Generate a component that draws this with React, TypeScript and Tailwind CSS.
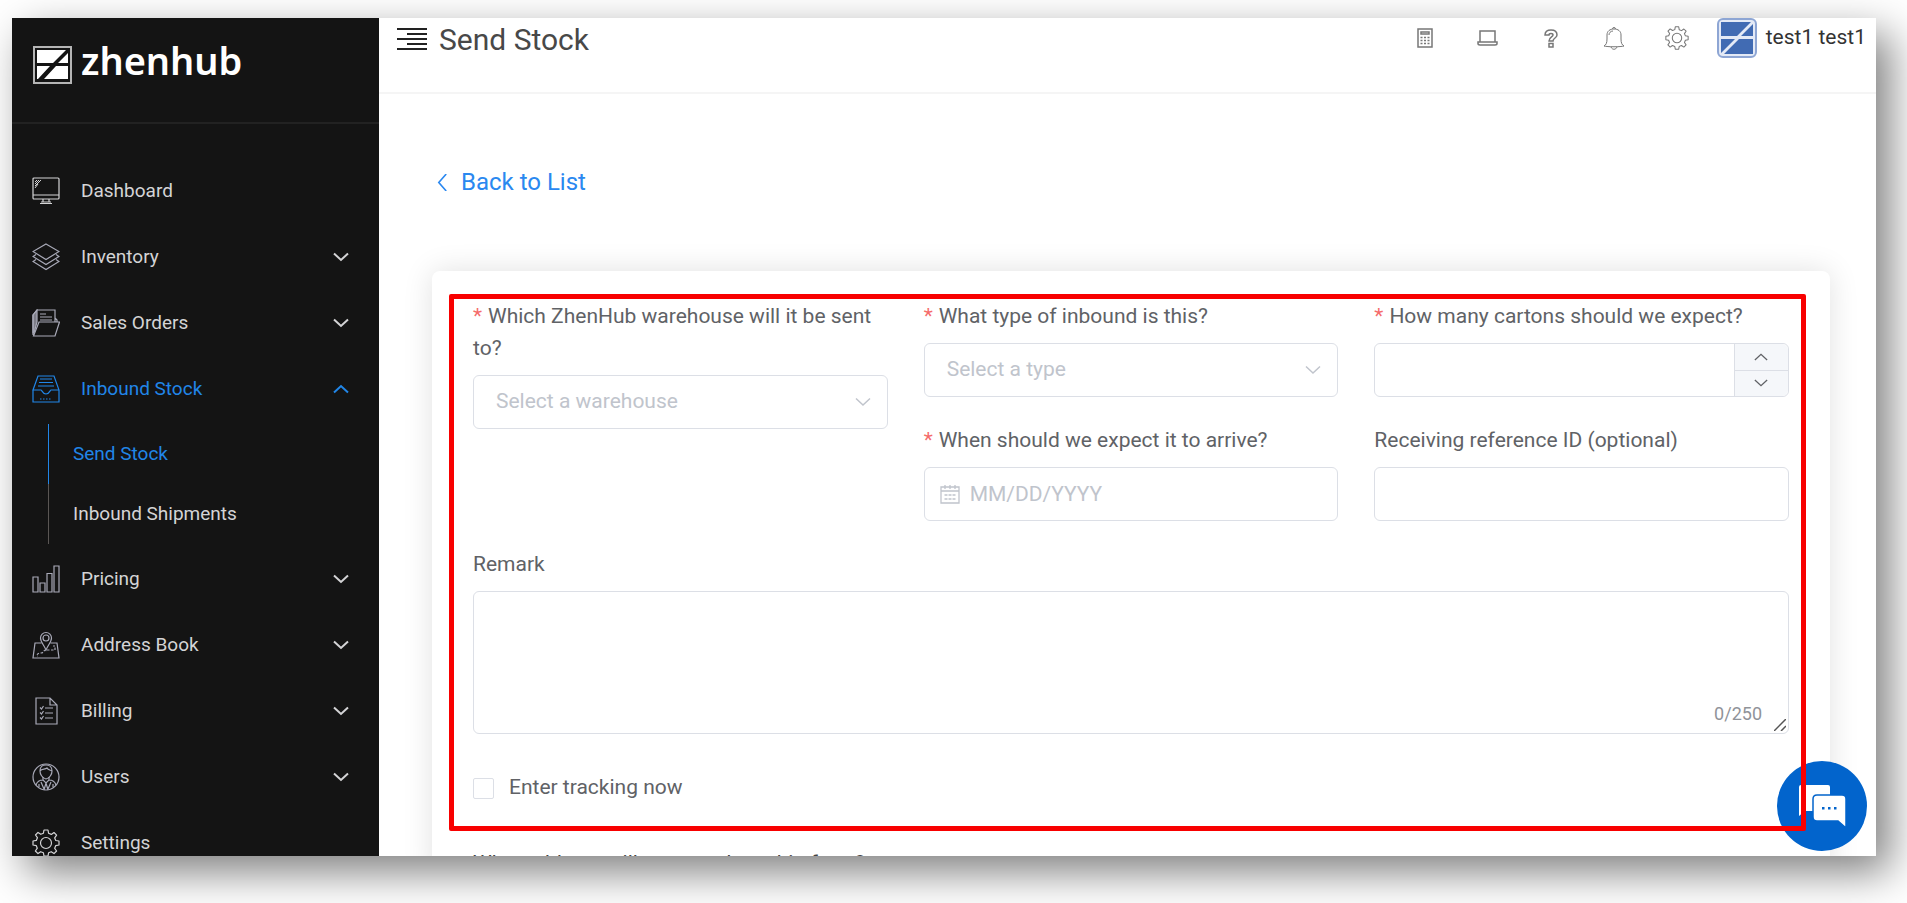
import React, { useState } from 'react';

const iconBase = {
  width: 28,
  height: 28,
  viewBox: '0 0 28 28',
  fill: 'none',
  stroke: 'currentColor',
  strokeWidth: 1.2,
  'aria-hidden': true,
} as const;

const gearPath =
  'M12 1h4l.6 3.3 2.7 1.1L22 3.500l2.600 2.600-1.900 2.800 1.100 2.600L27 12v4l-3.200.6-1.100 2.700 1.900 2.700-2.600 2.600-2.800-1.900-2.600 1.100L16 27h-4l-.6-3.200-2.700-1.100L6 24.600 3.400 22l1.900-2.800-1.100-2.600L1 16v-4l3.300-.6 1.100-2.700L3.500 6 6 3.400l2.800 1.900 2.600-1.100z';

const DashboardIcon = () => (
  <svg {...iconBase}>
    <rect x="1" y="1" width="26" height="21" rx="1" />
    <path d="M1 18h26M11 22v3M17 22v3M8 26.500h12M9 25h10" />
    <path d="M3 9l6-6M3 7l4-4M3 5l2-2M3 11l3-4" strokeWidth="1" />
  </svg>
);

const InventoryIcon = () => (
  <svg {...iconBase} className="text-[#a9aab8]">
    <path d="M14 1l13 7.500-13 8-13-8z" />
    <path d="M4 11.500l-3 2 13 8 13-8-3-2" />
    <path d="M4 16.500l-3 2 13 8 13-8-3-2" />
  </svg>
);

const OrdersIcon = () => (
  <svg {...iconBase} className="text-[#a9aab8]">
    <path d="M1.500 27L7 13h20.500L23 27zM1 26V6l4-5h18v12M23 9l2 2v2" />
    <path d="M1 6l4-5v12L2 24H1z" fill="currentColor" fillOpacity="0.7" />
    <path d="M8 5h6M8 8h12M8 11h12" />
  </svg>
);

const InboundIcon = () => (
  <svg {...iconBase}>
    <path d="M1 15v12h26V15L22 1H6L1 15h8c1 0 1.500 4 5 4s4-4 5-4h8" />
    <path d="M8 4h12M7 7.500h14M6 11h16" />
    <path d="M8 24h12" strokeDasharray="1.500 1.500" />
  </svg>
);

const PricingIcon = () => (
  <svg {...iconBase} className="text-[#a9aab8]">
    <path d="M1 12h5v15H1zM8 18h5v9H8zM15 8.500h5V27h-5zM22 1h5v26h-5z" />
  </svg>
);

const AddressIcon = () => (
  <svg {...iconBase} className="text-[#a9aab8]">
    <path d="M9.500 12H3L1 27h26l-2-15h-6.500" />
    <path d="M14 19c-2-5-5.500-8-5.500-12a5.500 5.500 0 0 1 11 0c0 4-3.500 7-5.500 12z" />
    <circle cx="14" cy="7" r="3" />
    <path d="M14 19c-3 0-2 3-5 3-4 0-5 3-3 3M15 19h8v-4h-2" strokeDasharray="2.500 1.500" />
  </svg>
);

const BillingIcon = () => (
  <svg {...iconBase} className="text-[#a9aab8]">
    <path d="M4 1h14l7 7v19H4zM18 1v7h7" />
    <path d="M8 10.500l1.500 1.500 2-3M13 11h8M8 15.500l1.500 1.500 2-3M13 16h8M8 20.500l1.500 1.500 2-3M13 21h8" />
  </svg>
);

const UsersIcon = () => (
  <svg {...iconBase} className="text-[#a9aab8]">
    <circle cx="14" cy="14" r="13" />
    <path d="M8 8c0-5 3-6 6-6s6 1 6 6c0 3-2 7-6 8-4-1-6-5-6-8zM8 8c2-3 5-1 7-3 1 2 3 2 5 3" />
    <path d="M11 14v3l3 3 3-3v-3M11 17c-4 0-6 2-7 5M17 17c4 0 6 2 7 5M14 20l-2 7M14 20l2 7M9 19l3 7M19 19l-3 7M7 21v3M21 21v3" />
  </svg>
);

const GearIcon = ({ size = 28 }: { size?: number }) => (
  <svg {...iconBase} width={size} height={size}>
    <path d={gearPath} strokeLinejoin="round" />
    <circle cx="14" cy="14" r="5.500" />
  </svg>
);

const Chevron = ({ direction, size = 16, width = 2 }: { direction: 'up' | 'down' | 'left'; size?: number; width?: number }) => {
  const paths = { up: 'M1 11.500L8 5l7 6.500', down: 'M1 4.500L8 11l7-6.500', left: 'M11.500 0L4.500 8l7 8' };
  return (
    <svg width={size} height={size} viewBox="0 0 16 16" fill="none" stroke="currentColor" strokeWidth={width} aria-hidden>
      <path d={paths[direction]} />
    </svg>
  );
};

type NavItem = {
  label: string;
  icon: React.FC;
  expandable?: boolean;
  children?: string[];
};

const navItems: NavItem[] = [
  { label: 'Dashboard', icon: DashboardIcon },
  { label: 'Inventory', icon: InventoryIcon, expandable: true },
  { label: 'Sales Orders', icon: OrdersIcon, expandable: true },
  { label: 'Inbound Stock', icon: InboundIcon, expandable: true, children: ['Send Stock', 'Inbound Shipments'] },
  { label: 'Pricing', icon: PricingIcon, expandable: true },
  { label: 'Address Book', icon: AddressIcon, expandable: true },
  { label: 'Billing', icon: BillingIcon, expandable: true },
  { label: 'Users', icon: UsersIcon, expandable: true },
  { label: 'Settings', icon: GearIcon },
];

const Sidebar: React.FC = () => (
  <aside className="w-[367px] shrink-0 bg-[#141414] text-[#d4d4d6]">
    {/* Logo */}
    <a href="#home" className="flex h-[106px] items-start gap-2 border-b-2 border-[#222] px-5 pt-5 text-white">
      <svg width="41" height="49" viewBox="0 0 41 49" aria-hidden>
        <rect x="2" y="9" width="37" height="36" fill="#141414" stroke="#b5b5b5" strokeWidth="2" />
        <path d="M5 12h29L21 25H5zM5 28h13L6 41H5zM36 15v10H26zM24 28h12v13H12z" fill="#fff" />
      </svg>
      <span className="font-['Noto_Sans'] text-[38px] leading-[44px] font-semibold">zhenhub</span>
    </a>

    {/* Navigation */}
    <nav className="pt-[34px]">
      {navItems.map(({ label, icon: Icon, expandable, children }) => (
        <div key={label} className={children ? 'text-[#2186e8]' : ''}>
          <a href="#nav" className="flex h-[66px] items-center pr-[30px] pl-5">
            <Icon />
            <span className="ml-[21px] flex-1 text-[19px]">{label}</span>
            {expandable && <Chevron direction={children ? 'up' : 'down'} />}
          </a>
          {children && (
            <ul className="my-[2px] ml-9">
              {children.map((child, index) => (
                <li key={child} className={index === 0 ? 'border-l border-[#2186e8]' : 'border-l border-[#5a5654] text-[#d4d4d6]'}>
                  <a href="#nav" className="flex h-[60px] items-center pl-6 text-[19px]">
                    {child}
                  </a>
                </li>
              ))}
            </ul>
          )}
        </div>
      ))}
    </nav>
  </aside>
);

const Header: React.FC = () => (
  <header className="flex h-[76px] items-start justify-between border-b-2 border-[#f5f5f5] pr-[10px] pl-[18px]">
    <div className="flex h-[42px] items-center gap-3">
      <button type="button" aria-label="Toggle menu" className="text-[#222]">
        <svg width="30" height="22" viewBox="0 0 30 22" stroke="currentColor" strokeWidth="2" aria-hidden>
          <path d="M0 1h30M10 6h20M0 11h30M10 16h20M0 21h30" />
        </svg>
      </button>
      <h1 className="text-[30px] text-[#484848]">Send Stock</h1>
    </div>

    <div className="flex h-10 items-center text-[#777]">
      <div className="mr-7 flex items-center gap-[39px]">
        <button type="button" aria-label="Calculator" className="flex w-6 justify-center">
          <svg width="16" height="20" viewBox="0 0 16 20" fill="none" stroke="currentColor" strokeWidth="1.500" aria-hidden>
            <path d="M1 1h14v18H1zM4 4h8v2H4z" />
            <path d="M3.500 9.500h2M7 9.500h2M10.500 9.500h2M3.500 12.500h2M7 12.500h2M10.500 12.500h2M3.500 15.500h2M7 15.500h2M10.500 15.500h2" />
          </svg>
        </button>
        <button type="button" aria-label="Desktop" className="flex w-6 justify-center">
          <svg width="21" height="16" viewBox="0 0 21 16" fill="none" stroke="currentColor" strokeWidth="1.500" aria-hidden>
            <path d="M3 12V1h15v11M1 12h19v1.500q0 1.500-2 1.500H3q-2 0-2-1.500z" />
          </svg>
        </button>
        <button type="button" aria-label="Help" className="flex w-6 justify-center">
          <svg width="14" height="19" viewBox="0 0 14 19" fill="none" stroke="currentColor" strokeWidth="1.500" aria-hidden>
            <path d="M1 6c0-3 2-5 6-5s6 2 6 5c0 3-4 3-4 6H5c0-4 4-4 4-6 0-2-4-2-4 0zM5 14.500h4V18H5z" />
          </svg>
        </button>
        <button type="button" aria-label="Notifications" className="flex w-6 justify-center">
          <svg width="22" height="24" viewBox="0 0 22 24" fill="none" stroke="currentColor" strokeWidth="1" aria-hidden>
            <path d="M1 20c2-1 3-3 3-7V9c0-4 3-6 7-6s7 2 7 6v4c0 4 1 6 3 7-3 1-17 1-20 0zM9.500 3a1.500 1.500 0 0 1 3 0M8 21c1 3 5 3 6 0M6 9c0-2 1.500-4 4-4" />
          </svg>
        </button>
        <button type="button" aria-label="Settings" className="flex w-6 justify-center">
          <GearIcon size={24} />
        </button>
      </div>
      <button type="button" className="flex items-center gap-[9px] text-[21px] text-[#333]">
        <svg width="40" height="40" viewBox="0 0 40 40" aria-hidden>
          <rect x="1" y="1" width="38" height="38" rx="5" fill="#e4eaf6" stroke="#8ea6d4" strokeWidth="2" />
          <path d="M4 4h30L20 18H4zM4 21h14L4 35zM36 6v12H24zM22 21h14v15H7z" fill="#416bb3" />
        </svg>
        test1 test1
      </button>
    </div>
  </header>
);

const controlClass =
  'h-[54px] w-full rounded-md border border-[#dcdfe6] bg-white text-[21px] text-[#606266] outline-none placeholder:text-[#c0c4cc] placeholder:opacity-100';

type FieldProps = {
  id: string;
  label: string;
  required?: boolean;
  children: React.ReactNode;
};

const Field: React.FC<FieldProps> = ({ id, label, required, children }) => (
  <div className="flex flex-col gap-[11px]">
    <label htmlFor={id} className="leading-8">
      {required && <span className="mr-[6px] text-[#f56c6c]">*</span>}
      {label}
    </label>
    <div className="relative flex">{children}</div>
  </div>
);

const SelectBox: React.FC<{ id: string; placeholder: string }> = ({ id, placeholder }) => (
  <>
    <select id={id} defaultValue="" className={`${controlClass} appearance-none pl-[22px] !text-[#c0c4cc]`}>
      <option value="">{placeholder}</option>
    </select>
    <span className="pointer-events-none absolute inset-y-0 right-[17px] flex items-center text-[#c0c4cc]">
      <Chevron direction="down" width={1.5} />
    </span>
  </>
);

const StockForm: React.FC = () => {
  const [cartons, setCartons] = useState('');
  const [remark, setRemark] = useState('');

  return (
    <form className="relative mx-auto rounded-lg bg-white px-[41px] pt-[29px] text-[21px] text-[#606266] shadow-[0_0_30px_rgba(0,0,0,0.12)]">
      <div className="grid grid-cols-3 gap-9">
        <div className="flex flex-col gap-[27px]">
          <Field id="warehouse" label="Which ZhenHub warehouse will it be sent to?" required>
            <SelectBox id="warehouse" placeholder="Select a warehouse" />
          </Field>
        </div>

        <div className="flex flex-col gap-[27px]">
          <Field id="type" label="What type of inbound is this?" required>
            <SelectBox id="type" placeholder="Select a type" />
          </Field>
          <Field id="arrival" label="When should we expect it to arrive?" required>
            <input id="arrival" type="text" placeholder="MM/DD/YYYY" className={`${controlClass} pl-[45px]`} />
            <span className="pointer-events-none absolute inset-y-0 left-4 flex items-center text-[#c0c4cc]">
              <svg width="20" height="20" viewBox="0 0 20 20" fill="none" stroke="currentColor" strokeWidth="1.300" aria-hidden>
                <path d="M1 3h18v16H1zM1 7h18M5 1v4M10 1v4M15 1v4" />
                <path d="M4.500 11h3M8.500 11h3M12.500 11h3M4.500 15h3M8.500 15h3M12.500 15h3" />
              </svg>
            </span>
          </Field>
        </div>

        <div className="flex flex-col gap-[27px]">
          <Field id="cartons" label="How many cartons should we expect?" required>
            <input
              id="cartons"
              type="text"
              inputMode="numeric"
              value={cartons}
              onChange={(e) => setCartons(e.target.value)}
              className={`${controlClass} pr-[70px] pl-5`}
            />
            <div className="absolute inset-y-px right-px flex w-[54px] flex-col overflow-hidden rounded-r-md border-l border-[#dcdfe6] bg-[#f5f7fa]">
              <button
                type="button"
                aria-label="Increase"
                onClick={() => setCartons(String(Number(cartons) + 1))}
                className="flex flex-1 items-center justify-center border-b border-[#dcdfe6]"
              >
                <Chevron direction="up" size={14} width={1.5} />
              </button>
              <button
                type="button"
                aria-label="Decrease"
                onClick={() => setCartons(String(Math.max(0, Number(cartons) - 1)))}
                className="flex flex-1 items-center justify-center"
              >
                <Chevron direction="down" size={14} width={1.5} />
              </button>
            </div>
          </Field>
          <Field id="reference" label="Receiving reference ID (optional)">
            <input id="reference" type="text" className={`${controlClass} px-5`} />
          </Field>
        </div>
      </div>

      <div className="mt-[27px]">
        <Field id="remark" label="Remark">
          <textarea
            id="remark"
            maxLength={250}
            value={remark}
            onChange={(e) => setRemark(e.target.value)}
            className="block h-[143px] w-full resize-none rounded-md border border-[#dcdfe6] px-5 py-2 outline-none"
          />
          <span className="pointer-events-none absolute right-[27px] bottom-2 text-[18px] leading-6 text-[#909399]">{remark.length}/250</span>
          <svg className="pointer-events-none absolute right-[3px] bottom-[3px]" width="12" height="12" viewBox="0 0 12 12" stroke="#555" strokeWidth="1.500" aria-hidden>
            <path d="M0 12L12 0M7 12l5-5" />
          </svg>
        </Field>
      </div>

      <label className="mt-[38px] flex h-8 items-center gap-[15px]">
        <input type="checkbox" className="size-[21px] appearance-none rounded-xs border border-[#dcdfe6] bg-white checked:bg-[#409eff]" />
        Enter tracking now
      </label>

      <p className="mt-[43px] leading-8 text-[#444]">What address will your product ship from?</p>

      {/* Highlight around the shipment details */}
      <div className="pointer-events-none absolute top-[23px] right-6 left-[17px] z-20 h-[537px] rounded-xs border-5 border-[#f80000]" />
    </form>
  );
};

const ChatButton: React.FC = () => (
  <button
    type="button"
    aria-label="Open chat"
    className="absolute right-[9px] bottom-[5px] z-10 flex size-[90px] items-center justify-center rounded-full bg-[#0264cc]"
  >
    <svg width="48" height="44" viewBox="0 0 48 44" aria-hidden>
      <path d="M3 1h27q2 0 2 2v24H7l-6 5V3q0-2 2-2z" fill="#fff" />
      <path d="M19 11h25q4 0 4 4v29l-8-7H19q-4 0-4-4V15q0-4 4-4z" fill="#fff" stroke="#0264cc" strokeWidth="1.500" />
      <path d="M24 23h2.500v2.500H24zM30 23h2.500v2.500H30zM36 23h2.500v2.500H36z" fill="#0264cc" />
    </svg>
  </button>
);

const App: React.FC = () => {
  return (
    <div className="h-screen overflow-hidden bg-white pt-[18px] pr-[31px] pb-[47px] pl-3 font-[Roboto,sans-serif]">
      <div className="h-full shadow-[14px_16px_40px_rgba(0,0,0,0.5)]">
        <div className="relative flex h-full overflow-hidden bg-white">
          <Sidebar />
          <main className="min-w-0 flex-1">
            <Header />
            <div className="pt-[70px] pr-[46px] pl-[53px]">
              <a href="#list" className="mb-[71px] ml-[2px] flex h-9 items-center gap-[10px] text-[24px] text-[#2a88f0]">
                <Chevron direction="left" size={17} width={1.5} />
                Back to List
              </a>
              <StockForm />
            </div>
          </main>
          <ChatButton />
        </div>
      </div>
    </div>
  );
};

export default App;
